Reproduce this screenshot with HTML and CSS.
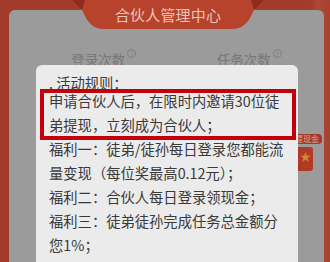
FILE: index.html
```html
<!DOCTYPE html>
<html lang="zh">
<head>
<meta charset="utf-8">
<link rel="stylesheet" href="styles.css">
</head>
<body>
<div class="page">
  <div class="card">
    <div class="tab">
      <svg class="tab-shape" width="192" height="30" viewBox="0 0 192 30">
        <path d="M0 0 L192 0 L182 10 C176 24 170 29 160 29 L32 29 C22 29 16 24 10 10 Z" fill="#b7432d"/>
        <path d="M0 0 L10 10 L13 0 Z" fill="#8e2a1e"/>
        <path d="M192 0 L182 10 L179 0 Z" fill="#8e2a1e"/>
      </svg>
      <span class="tab-title">合伙人管理中心</span>
    </div>
    <div class="stats">
      <div class="stat">登录次数<span class="q">?</span></div>
      <div class="stat">任务次数<span class="q">?</span></div>
    </div>
    <div class="peek-badge">提现金</div>
    <div class="peek-icon"><span class="star">★</span></div>
  </div>
  <div class="modal">
    <p class="rule title">. 活动规则：</p>
    <p class="rule">申请合伙人后，在限时内邀请30位徒弟提现，立刻成为合伙人；</p>
    <p class="rule">福利一：徒弟/徒孙每日登录您都能流量变现（每位奖最高0.12元）；</p>
    <p class="rule">福利二：合伙人每日登录领现金；</p>
    <p class="rule">福利三：徒弟徒孙完成任务总金额分您1%；</p>
  </div>
  <div class="highlight"></div>
</div>
</body>
</html>
```
FILE: styles.css
```css
html, body {
  margin: 0;
  padding: 0;
}
body {
  width: 330px;
  height: 262px;
  overflow: hidden;
  background: #a23b29;
  font-family: "Noto Sans CJK SC", "Noto Sans", sans-serif;
}
.page {
  position: relative;
  height: 262px;
  padding: 10px 6px 0 9px;
  box-sizing: border-box;
  background: linear-gradient(90deg, #a23b29 0, #a23b29 310px, #ad4836 318px, #a9402e 330px);
}
.card {
  position: relative;
  height: 260px;
  background: #9b9b9b;
  border-radius: 6px 6px 0 0;
}
.tab {
  position: absolute;
  left: 63px;
  top: -10px;
  width: 192px;
  height: 30px;
}
.tab-shape {
  display: block;
}
.tab-title {
  position: absolute;
  left: 0;
  right: 0;
  top: 5px;
  text-align: center;
  color: #e9c3b9;
  font-size: 15px;
  line-height: 20px;
  letter-spacing: 0.2px;
}
.stats {
  display: grid;
  grid-template-columns: 1fr 1fr;
  padding: 39px 2px 0 22px;
}
.stat {
  text-align: center;
  color: #777777;
  font-size: 13.5px;
  line-height: 18px;
}
.q {
  display: inline-block;
  width: 7px;
  height: 7px;
  border: 1px solid #7d7d7d;
  border-radius: 50%;
  font-size: 6px;
  line-height: 7px;
  text-align: center;
  vertical-align: 9px;
  margin-left: 2px;
  color: #7d7d7d;
}
.peek-badge {
  position: absolute;
  left: 283px;
  top: 124px;
  width: 30px;
  height: 10px;
  background: #a63a2a;
  border-radius: 4px;
  color: #d9a79b;
  font-size: 8px;
  line-height: 10px;
  text-align: right;
  padding-right: 3px;
  box-sizing: border-box;
}
.peek-icon {
  position: absolute;
  left: 283px;
  top: 137px;
  width: 21px;
  height: 24px;
  background: #b13a26;
  border-radius: 3px;
  overflow: hidden;
}
.star {
  position: absolute;
  left: 8px;
  top: 3px;
  color: #d28a2a;
  font-size: 11px;
  line-height: 12px;
}
.modal {
  position: absolute;
  left: 36px;
  top: 65px;
  width: 262px;
  height: 210px;
  background: #ebebeb;
  border-radius: 6px;
  padding: 12px 11px 0 13px;
  box-sizing: border-box;
}
.rule {
  margin: 0;
  color: #3a3a3a;
  font-size: 14.3px;
  line-height: 24px;
}
.rule.title {
  line-height: 12px;
}
.highlight {
  position: absolute;
  left: 40px;
  top: 89px;
  width: 256px;
  height: 51px;
  border: 4px solid #c2000b;
  box-sizing: border-box;
}
```
